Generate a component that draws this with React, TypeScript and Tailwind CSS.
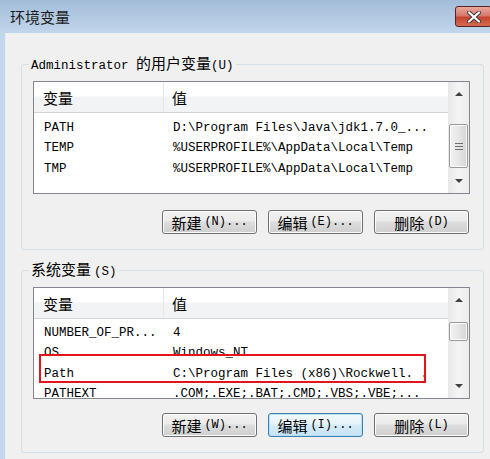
import React from 'react'

const mono = "font-['Liberation_Mono','Noto_Sans_CJK_SC',monospace]"

function Zh({ children }: { children: React.ReactNode }) {
  return <span className="font-['Noto_Sans_CJK_SC',sans-serif] text-[15px] leading-none">{children}</span>
}

type Row = { name: string; value: string }

function ScrollBar({ thumbTop, thumbHeight, grip }: { thumbTop: number; thumbHeight: number; grip?: boolean }) {
  return (
    <div className="flex w-[21px] flex-col bg-gradient-to-r from-[#e8e8e8] via-[#f4f4f4] to-[#ececec]">
      <div className="flex h-[24px] items-center justify-center">
        <div className="h-0 w-0 border-x-[4px] border-b-[4px] border-x-transparent border-b-[#3f3f3f]" />
      </div>
      <div className="flex-1 px-[1px]">
        <div
          className="flex flex-col items-center justify-center gap-[2px] rounded-[2px] border border-[#9b9b9b] bg-gradient-to-r from-[#f3f3f3] via-[#e6e6e6] to-[#d4d4d4] shadow-[inset_0_0_0_1px_#fafafa]"
          style={{ marginTop: thumbTop, height: thumbHeight }}
        >
          {grip && (
            <>
              <div className="h-px w-[8px] bg-[#6d6d6d]" />
              <div className="h-px w-[8px] bg-[#6d6d6d]" />
              <div className="h-px w-[8px] bg-[#6d6d6d]" />
            </>
          )}
        </div>
      </div>
      <div className="flex h-[24px] items-center justify-center">
        <div className="h-0 w-0 border-x-[4px] border-t-[4px] border-x-transparent border-t-[#3f3f3f]" />
      </div>
    </div>
  )
}

function VarList({
  rows,
  height,
  rowsTop,
  thumbTop,
  thumbHeight,
  grip,
  children,
}: {
  rows: Row[]
  height: number
  rowsTop: number
  thumbTop: number
  thumbHeight: number
  grip?: boolean
  children?: React.ReactNode
}) {
  return (
    <div className="relative flex w-[437px] border border-[#828790] bg-white" style={{ height }}>
      <div className="flex flex-1 flex-col overflow-hidden">
        <div className="flex h-[31px] shrink-0 border-b border-[#d5d5d5] bg-[linear-gradient(#ffffff_0%,#ffffff_46%,#f2f3f5_50%,#f2f3f5_100%)]">
          <div className="flex w-[130px] items-center border-r border-[#e3e6ea] pl-[9px]">
            <Zh>变量</Zh>
          </div>
          <div className="flex items-center pl-[8px]">
            <Zh>值</Zh>
          </div>
        </div>
        <div className={`flex flex-col text-[12.5px] text-black ${mono}`} style={{ paddingTop: rowsTop }}>
          {rows.map((r) => (
            <div key={r.name} className="flex h-[20.5px] shrink-0 items-center whitespace-pre">
              <div className="w-[139px] pl-[10px]">{r.name}</div>
              <div>{r.value}</div>
            </div>
          ))}
        </div>
      </div>
      <ScrollBar thumbTop={thumbTop} thumbHeight={thumbHeight} grip={grip} />
      {children}
    </div>
  )
}

function Btn({ zh, rest, primary }: { zh: string; rest: string; primary?: boolean }) {
  return (
    <button
      className={`flex h-[24px] w-[95px] items-center justify-center rounded-[3px] border text-black ${
        primary
          ? 'border-[#3c7fb1] bg-[linear-gradient(#f2f9fd_0%,#e6f3fb_45%,#d4ebf9_50%,#c7e3f5_100%)] shadow-[inset_0_0_0_1px_#b7e0f7]'
          : 'border-[#707070] bg-[linear-gradient(#f2f2f2_0%,#ebebeb_45%,#dddddd_50%,#cfcfcf_100%)] shadow-[inset_0_0_0_1px_#fbfbfb]'
      }`}
    >
      <Zh>{zh}</Zh>
      <span className={`${mono} ml-[3px] text-[12px] leading-none`}>{rest}</span>
    </button>
  )
}

function Group({ legend, children, className }: { legend: React.ReactNode; children: React.ReactNode; className?: string }) {
  return (
    <fieldset className={`w-[463px] rounded-[3px] border border-[#d5dfe5] pb-[15px] pl-[11px] pr-[13px] ${className ?? ''}`}>
      <legend className={`-ml-[4px] px-[2px] text-[12.5px] leading-[16px] text-black ${mono}`}>{legend}</legend>
      {children}
    </fieldset>
  )
}

export default function App() {
  const userRows: Row[] = [
    { name: 'PATH', value: 'D:\\Program Files\\Java\\jdk1.7.0_...' },
    { name: 'TEMP', value: '%USERPROFILE%\\AppData\\Local\\Temp' },
    { name: 'TMP', value: '%USERPROFILE%\\AppData\\Local\\Temp' },
  ]
  const sysRows: Row[] = [
    { name: 'NUMBER_OF_PR...', value: '4' },
    { name: 'OS', value: 'Windows_NT' },
    { name: 'Path', value: 'C:\\Program Files (x86)\\Rockwell. .' },
    { name: 'PATHEXT', value: '.COM;.EXE;.BAT;.CMD;.VBS;.VBE;...' },
  ]

  return (
    <div className="flex h-[459px] w-[490px] flex-col overflow-hidden bg-[#c3d7ec]">
      <div className="flex h-[33px] shrink-0 items-center justify-between bg-gradient-to-b from-[#a2bcd9] to-[#c2d6ec] pl-[10px]">
        <span className="font-['Noto_Sans_CJK_SC',sans-serif] text-[15px] leading-none text-[#1b1b1b]">环境变量</span>
        <div className="-mr-[2px] flex h-[21px] w-[37px] items-center justify-center rounded-[3px] border border-[#5a2222] bg-[linear-gradient(#e9a99c_0%,#d7786a_45%,#c7452f_55%,#d26a4f_100%)]">
          <svg width="14" height="12" viewBox="0 0 14 12">
            <path d="M2 1.5 L12 10.5 M12 1.5 L2 10.5" stroke="#3a3a3a" strokeWidth="4" strokeLinecap="round" />
            <path d="M2 1.5 L12 10.5 M12 1.5 L2 10.5" stroke="#ffffff" strokeWidth="2.2" strokeLinecap="round" />
          </svg>
        </div>
      </div>
      <div className="ml-[5px] flex-1 border-l border-[#e8eef5] bg-[#f0f0f0] pl-[15px]">
        <Group
          className="mt-[22px] pt-[7px]"
          legend={
            <>
              Administrator <Zh>的用户变量</Zh>(U)
            </>
          }
        >
          <VarList rows={userRows} height={113} rowsTop={5} thumbTop={18} thumbHeight={44} grip />
          <div className="mt-[16px] flex w-[437px] justify-end gap-[11px] pr-[1px]">
            <Btn zh="新建" rest="(N)..." />
            <Btn zh="编辑" rest="(E)..." />
            <Btn zh="删除" rest="(D)" />
          </div>
        </Group>
        <Group
          className="mt-[11px] pt-[7px]"
          legend={
            <>
              <Zh>系统变量</Zh>
              <span className="ml-[3px]">(S)</span>
            </>
          }
        >
          <VarList rows={sysRows} height={112} rowsTop={4} thumbTop={10} thumbHeight={19}>
            <div className="absolute left-[5px] top-[66px] h-[29px] w-[387px] border-2 border-[#e3141b]" />
          </VarList>
          <div className="mt-[14px] flex w-[437px] justify-end gap-[11px] pr-[1px]">
            <Btn zh="新建" rest="(W)..." />
            <Btn zh="编辑" rest="(I)..." primary />
            <Btn zh="删除" rest="(L)" />
          </div>
        </Group>
      </div>
    </div>
  )
}
